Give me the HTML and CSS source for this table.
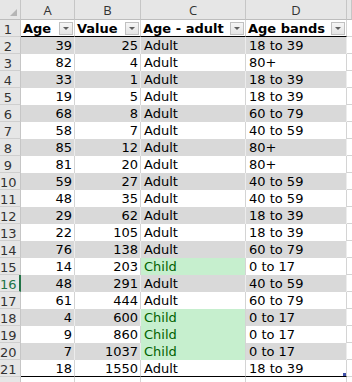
FILE: index.html
```html
<!DOCTYPE html>
<html>
<head>
<meta charset="utf-8">
<link rel="stylesheet" href="styles.css">
</head>
<body>
<div class="sheet">
  <div class="row colhead">
    <div class="corner"><span class="tri"></span></div>
    <div class="ch">A</div><div class="ch">B</div><div class="ch">C</div><div class="ch">D</div><div class="ch e"></div>
  </div>
  <div class="row hdr">
    <div class="rn">1</div>
    <div class="c h"><span>Age</span><i class="dd"></i></div>
    <div class="c h"><span>Value</span><i class="dd"></i></div>
    <div class="c h"><span>Age - adult</span><i class="dd"></i></div>
    <div class="c h"><span>Age bands</span><i class="dd"></i></div>
    <div class="c e"></div>
  </div>
  <div class="row band"><div class="rn">2</div><div class="c n">39</div><div class="c n">25</div><div class="c">Adult</div><div class="c">18 to 39</div><div class="c e"></div></div>
  <div class="row"><div class="rn">3</div><div class="c n">82</div><div class="c n">4</div><div class="c">Adult</div><div class="c">80+</div><div class="c e"></div></div>
  <div class="row band"><div class="rn">4</div><div class="c n">33</div><div class="c n">1</div><div class="c">Adult</div><div class="c">18 to 39</div><div class="c e"></div></div>
  <div class="row"><div class="rn">5</div><div class="c n">19</div><div class="c n">5</div><div class="c">Adult</div><div class="c">18 to 39</div><div class="c e"></div></div>
  <div class="row band"><div class="rn">6</div><div class="c n">68</div><div class="c n">8</div><div class="c">Adult</div><div class="c">60 to 79</div><div class="c e"></div></div>
  <div class="row"><div class="rn">7</div><div class="c n">58</div><div class="c n">7</div><div class="c">Adult</div><div class="c">40 to 59</div><div class="c e"></div></div>
  <div class="row band"><div class="rn">8</div><div class="c n">85</div><div class="c n">12</div><div class="c">Adult</div><div class="c">80+</div><div class="c e"></div></div>
  <div class="row"><div class="rn">9</div><div class="c n">81</div><div class="c n">20</div><div class="c">Adult</div><div class="c">80+</div><div class="c e"></div></div>
  <div class="row band"><div class="rn">10</div><div class="c n">59</div><div class="c n">27</div><div class="c">Adult</div><div class="c">40 to 59</div><div class="c e"></div></div>
  <div class="row"><div class="rn">11</div><div class="c n">48</div><div class="c n">35</div><div class="c">Adult</div><div class="c">40 to 59</div><div class="c e"></div></div>
  <div class="row band"><div class="rn">12</div><div class="c n">29</div><div class="c n">62</div><div class="c">Adult</div><div class="c">18 to 39</div><div class="c e"></div></div>
  <div class="row"><div class="rn">13</div><div class="c n">22</div><div class="c n">105</div><div class="c">Adult</div><div class="c">18 to 39</div><div class="c e"></div></div>
  <div class="row band"><div class="rn">14</div><div class="c n">76</div><div class="c n">138</div><div class="c">Adult</div><div class="c">60 to 79</div><div class="c e"></div></div>
  <div class="row"><div class="rn">15</div><div class="c n">14</div><div class="c n">203</div><div class="c child">Child</div><div class="c">0 to 17</div><div class="c e"></div></div>
  <div class="row band"><div class="rn sel">16</div><div class="c n">48</div><div class="c n">291</div><div class="c">Adult</div><div class="c">40 to 59</div><div class="c e"></div></div>
  <div class="row"><div class="rn">17</div><div class="c n">61</div><div class="c n">444</div><div class="c">Adult</div><div class="c">60 to 79</div><div class="c e"></div></div>
  <div class="row band"><div class="rn">18</div><div class="c n">4</div><div class="c n">600</div><div class="c child">Child</div><div class="c">0 to 17</div><div class="c e"></div></div>
  <div class="row"><div class="rn">19</div><div class="c n">9</div><div class="c n">860</div><div class="c child">Child</div><div class="c">0 to 17</div><div class="c e"></div></div>
  <div class="row band"><div class="rn">20</div><div class="c n">7</div><div class="c n">1037</div><div class="c child">Child</div><div class="c">0 to 17</div><div class="c e"></div></div>
  <div class="row last"><div class="rn">21</div><div class="c n">18</div><div class="c n">1550</div><div class="c">Adult</div><div class="c resize">18 to 39<i class="handle"></i></div><div class="c e"></div></div>
  <div class="row tail"><div class="rn"></div><div class="c"></div><div class="c"></div><div class="c"></div><div class="c"></div><div class="c e"></div></div>
</div>
</body>
</html>
```
FILE: styles.css
```css
* { box-sizing: border-box; }
html, body { margin: 0; padding: 0; background: #fff; }
body { width: 352px; height: 382px; overflow: hidden; }

.sheet {
  font-family: "DejaVu Sans", Verdana, sans-serif;
  font-size: 13px;
  color: #000;
}

.row {
  display: grid;
  grid-template-columns: 21px 54px 66px 105px 101px 1fr;
  height: 17px;
}

.colhead { height: 20px; }
.colhead > div {
  background: #e6e6e6;
  border-right: 1px solid #c6c6c6;
  border-bottom: 1px solid #bdbdbd;
}
.corner { position: relative; }
.tri {
  position: absolute;
  right: 3px;
  bottom: 3px;
  width: 0; height: 0;
  border-left: 7px solid transparent;
  border-bottom: 7px solid #b5b5b5;
}
.ch {
  font-family: "Open Sans", "Liberation Sans", sans-serif;
  font-size: 13px;
  color: #333;
  text-align: center;
  line-height: 18px;
  padding-top: 1px;
}

.rn {
  background: #e6e6e6;
  border-right: 1px solid #c6c6c6;
  border-bottom: 1px solid #cfcfcf;
  color: #333;
  text-align: center;
  padding-right: 4px;
  line-height: 14px;
  padding-top: 3px;
  overflow: hidden;
  white-space: nowrap;
}
.rn.sel {
  color: #217346;
  border-right: 2px solid #217346;
}

.c {
  border-right: 1px solid #d4d4d4;
  line-height: 14px;
  padding: 2px 2px 0 3px;
  white-space: nowrap;
  overflow: hidden;
}
.c.n { text-align: right; padding-right: 2px; padding-left: 0; }

.band .c { background: #d9d9d9; border-right-color: #ececec; }
.band .c.e { background: #fff; border-right-color: #d4d4d4; }
.c.e { border-bottom: 1px solid #d4d4d4; }

.c.child {
  background: #c6efce;
  color: #006100;
  border-right-color: #d4d4d4;
}
.band .c.child { background: #c6efce; border-right-color: #d4d4d4; }

.hdr .c.h {
  display: flex;
  align-items: center;
  font-weight: bold;
  border-bottom: 1px solid #000;
  padding: 0 1px 0 2px;
  line-height: 14px;
}
.hdr .c.h span { padding-top: 2px; }
.hdr .c.e { border-bottom: 1px solid #d4d4d4; }
.dd {
  margin-left: auto;
  width: 14px;
  height: 13px;
  border: 1px solid #c0c0c0;
  background: linear-gradient(#f6f6f6, #e4e4e4);
  position: relative;
  flex: none;
}
.dd::after {
  content: "";
  position: absolute;
  left: 3px;
  top: 4px;
  border-left: 3px solid transparent;
  border-right: 3px solid transparent;
  border-top: 3px solid #5f5f5f;
}

.last .c { border-bottom: 1px solid #000; }
.last .c.e { border-bottom: 1px solid #d4d4d4; }
.resize { position: relative; }
.handle {
  position: absolute;
  right: 0;
  bottom: 0;
  width: 3px;
  height: 3px;
  background: #3f4fa8;
}

.tail { height: 10px; }
.tail .c { border-bottom: none; }
```
